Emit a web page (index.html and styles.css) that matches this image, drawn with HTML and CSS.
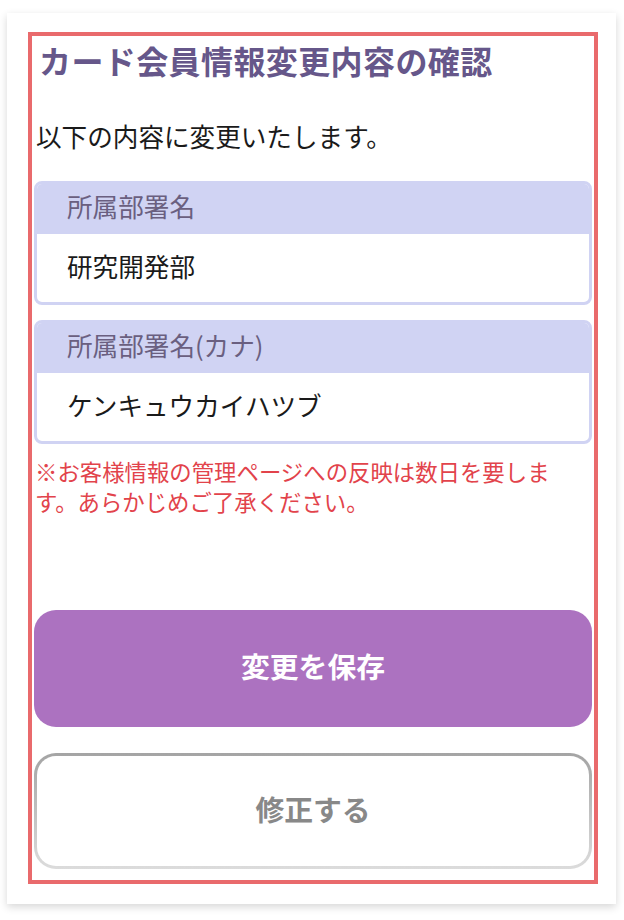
FILE: index.html
```html
<!DOCTYPE html>
<html lang="ja">
<head>
<meta charset="utf-8">
<title>カード会員情報変更内容の確認</title>
<link rel="stylesheet" href="styles.css">
</head>
<body>
<div class="card">
  <div class="frame">
    <h1 class="title">カード会員情報変更内容の確認</h1>
    <p class="lead">以下の内容に変更いたします。</p>
    <div class="field">
      <div class="field-label">所属部署名</div>
      <div class="field-value">研究開発部</div>
    </div>
    <div class="field">
      <div class="field-label">所属部署名(カナ)</div>
      <div class="field-value">ケンキュウカイハツブ</div>
    </div>
    <p class="note">※お客様情報の管理ページへの反映は数日を要します。あらかじめご了承ください。</p>
    <div class="actions">
      <button class="btn btn-primary" type="button">変更を保存</button>
      <button class="btn btn-secondary" type="button">修正する</button>
    </div>
  </div>
</div>
</body>
</html>
```
FILE: styles.css
```css
* { box-sizing: border-box; }
html, body { margin: 0; padding: 0; background: #ffffff; }
body {
  font-family: "Noto Sans CJK JP", "Noto Sans", sans-serif;
  color: #1a1a1a;
}
.card {
  margin: 13px 8px 17px 7px;
  width: 609px;
  padding: 19px 18px 20px 21px;
  background: #ffffff;
  box-shadow: 0 3px 8px rgba(0, 0, 0, 0.16);
}
.frame {
  border: 4px solid #e96a6c;
  padding: 2px 2px 11px 2px;
  display: flex;
  flex-direction: column;
}
.title {
  margin: 0;
  padding-left: 5px;
  font-size: 32px;
  line-height: 44px;
  font-weight: 700;
  letter-spacing: 0.4px;
  color: #66578a;
}
.lead {
  margin: 35px 0 0 0;
  padding-left: 2px;
  font-size: 25.6px;
  line-height: 38px;
  color: #1a1a1a;
}
.field {
  margin-top: 26px;
  border: 3px solid #d0d3f3;
  border-radius: 8px;
  overflow: hidden;
  background: #ffffff;
}
.field + .field { margin-top: 15px; }
.field-label {
  background: #d0d3f3;
  height: 50px;
  line-height: 44px;
  padding-left: 30px;
  font-size: 25.6px;
  color: #6a5f80;
}
.field-value {
  height: 68px;
  line-height: 64px;
  padding-left: 30px;
  font-size: 25.6px;
  color: #1a1a1a;
}
.note {
  margin: 12px 30px 0 0;
  padding-left: 1px;
  font-size: 22.4px;
  line-height: 30px;
  color: #e2434b;
}
.actions {
  margin-top: 94px;
  display: flex;
  flex-direction: column;
  gap: 26px;
}
.btn {
  display: flex;
  align-items: center;
  justify-content: center;
  width: 100%;
  font-family: "Noto Sans CJK JP", "Noto Sans", sans-serif;
  font-size: 28.8px;
  font-weight: 700;
  border-radius: 22px;
  cursor: pointer;
  padding: 0 0 6px 0;
}
.btn-primary {
  height: 117px;
  background: #ac72c0;
  color: #ffffff;
  border: none;
}
.btn-secondary {
  height: 116px;
  color: #888888;
  border: 3px solid transparent;
  background: linear-gradient(#ffffff, #ffffff) padding-box,
              linear-gradient(#a4a4a4, #dcdcdc) border-box;
}
```
